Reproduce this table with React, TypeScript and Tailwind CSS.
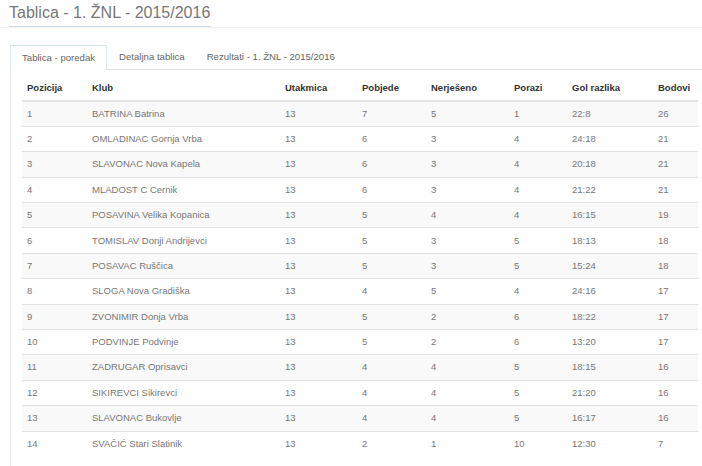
import * as React from "react";

const ROWS: [string, string, number, number, number, number, string, number][] = [
    ["1", "BATRINA Batrina", 13, 7, 5, 1, "22:8", 26],
    ["2", "OMLADINAC Gornja Vrba", 13, 6, 3, 4, "24:18", 21],
    ["3", "SLAVONAC Nova Kapela", 13, 6, 3, 4, "20:18", 21],
    ["4", "MLADOST C Cernik", 13, 6, 3, 4, "21:22", 21],
    ["5", "POSAVINA Velika Kopanica", 13, 5, 4, 4, "16:15", 19],
    ["6", "TOMISLAV Donji Andrijevci", 13, 5, 3, 5, "18:13", 18],
    ["7", "POSAVAC Ruščica", 13, 5, 3, 5, "15:24", 18],
    ["8", "SLOGA Nova Gradiška", 13, 4, 5, 4, "24:16", 17],
    ["9", "ZVONIMIR Donja Vrba", 13, 5, 2, 6, "18:22", 17],
    ["10", "PODVINJE Podvinje", 13, 5, 2, 6, "13:20", 17],
    ["11", "ZADRUGAR Oprisavci", 13, 4, 4, 5, "18:15", 16],
    ["12", "SIKIREVCI Sikirevci", 13, 4, 4, 5, "21:20", 16],
    ["13", "SLAVONAC Bukovlje", 13, 4, 4, 5, "16:17", 16],
    ["14", "SVAČIĆ Stari Slatinik", 13, 2, 1, 10, "12:30", 7],
];

const HEADERS = ["Pozicija", "Klub", "Utakmica", "Pobjede", "Nerješeno", "Porazi", "Gol razlika", "Bodovi"];
const WIDTHS = ["w-[65px]", "w-[193px]", "w-[77px]", "w-[69px]", "w-[83px]", "w-[58px]", "w-[86px]", "w-[45px]"];

export default function App() {
    return (
        <div className="w-[702px] h-[466px] overflow-hidden bg-white font-['Liberation_Sans',Arial,sans-serif]">
            {/* title */}
            <div className="pl-[9px] pt-[1px] border-b border-[#f2f2f2]">
                <h1 className="inline-block w-[202px] border-b border-[#cfdfea] pb-[3px] text-[16px] leading-[20px] text-[#777]">
                    Tablica - 1. ŽNL - 2015/2016
                </h1>
            </div>

            {/* tabs */}
            <div className="mt-[17px] pl-[10px]">
                <div className="flex items-end text-[9.6px] text-[#666]">
                    <div className="h-[25px] px-[11px] flex items-center border border-b-0 border-[#dde6ec] border-t-[#d4e3ec] bg-white">
                        Tablica - poredak
                    </div>
                    <div className="flex-1 flex items-end h-[25px] border-b border-[#e3e3e3]">
                        <div className="h-[24px] pl-[12px] pr-[11px] flex items-center">Detaljna tablica</div>
                        <div className="h-[24px] px-[11px] flex items-center">Rezultati - 1. ŽNL - 2015/2016</div>
                    </div>
                </div>

                {/* panel */}
                <div className="border-l border-[#e8e8e8] pl-[11px] pt-[7px] h-[400px]">
                    <table className="table-fixed border-collapse text-[9.5px]">
                        <thead>
                            <tr className="h-[24px] border-b-2 border-[#e6e6e6]">
                                {HEADERS.map((h, i) => (
                                    <th key={h} className={`${WIDTHS[i]} pl-[5px] text-left font-bold text-[#333]`}>
                                        {h}
                                    </th>
                                ))}
                            </tr>
                        </thead>
                        <tbody>
                            {ROWS.map((r, idx) => (
                                <tr
                                    key={r[0]}
                                    className={`h-[25.4px] border-b border-[#e3e3e3] last:border-b-0 ${idx % 2 === 0 ? "bg-[#f9f9f9]" : "bg-white"}`}
                                >
                                    {r.map((c, i) => (
                                        <td key={i} className="pl-[5px] text-[#777]">
                                            {c}
                                        </td>
                                    ))}
                                </tr>
                            ))}
                        </tbody>
                    </table>
                </div>
            </div>
        </div>
    );
}
